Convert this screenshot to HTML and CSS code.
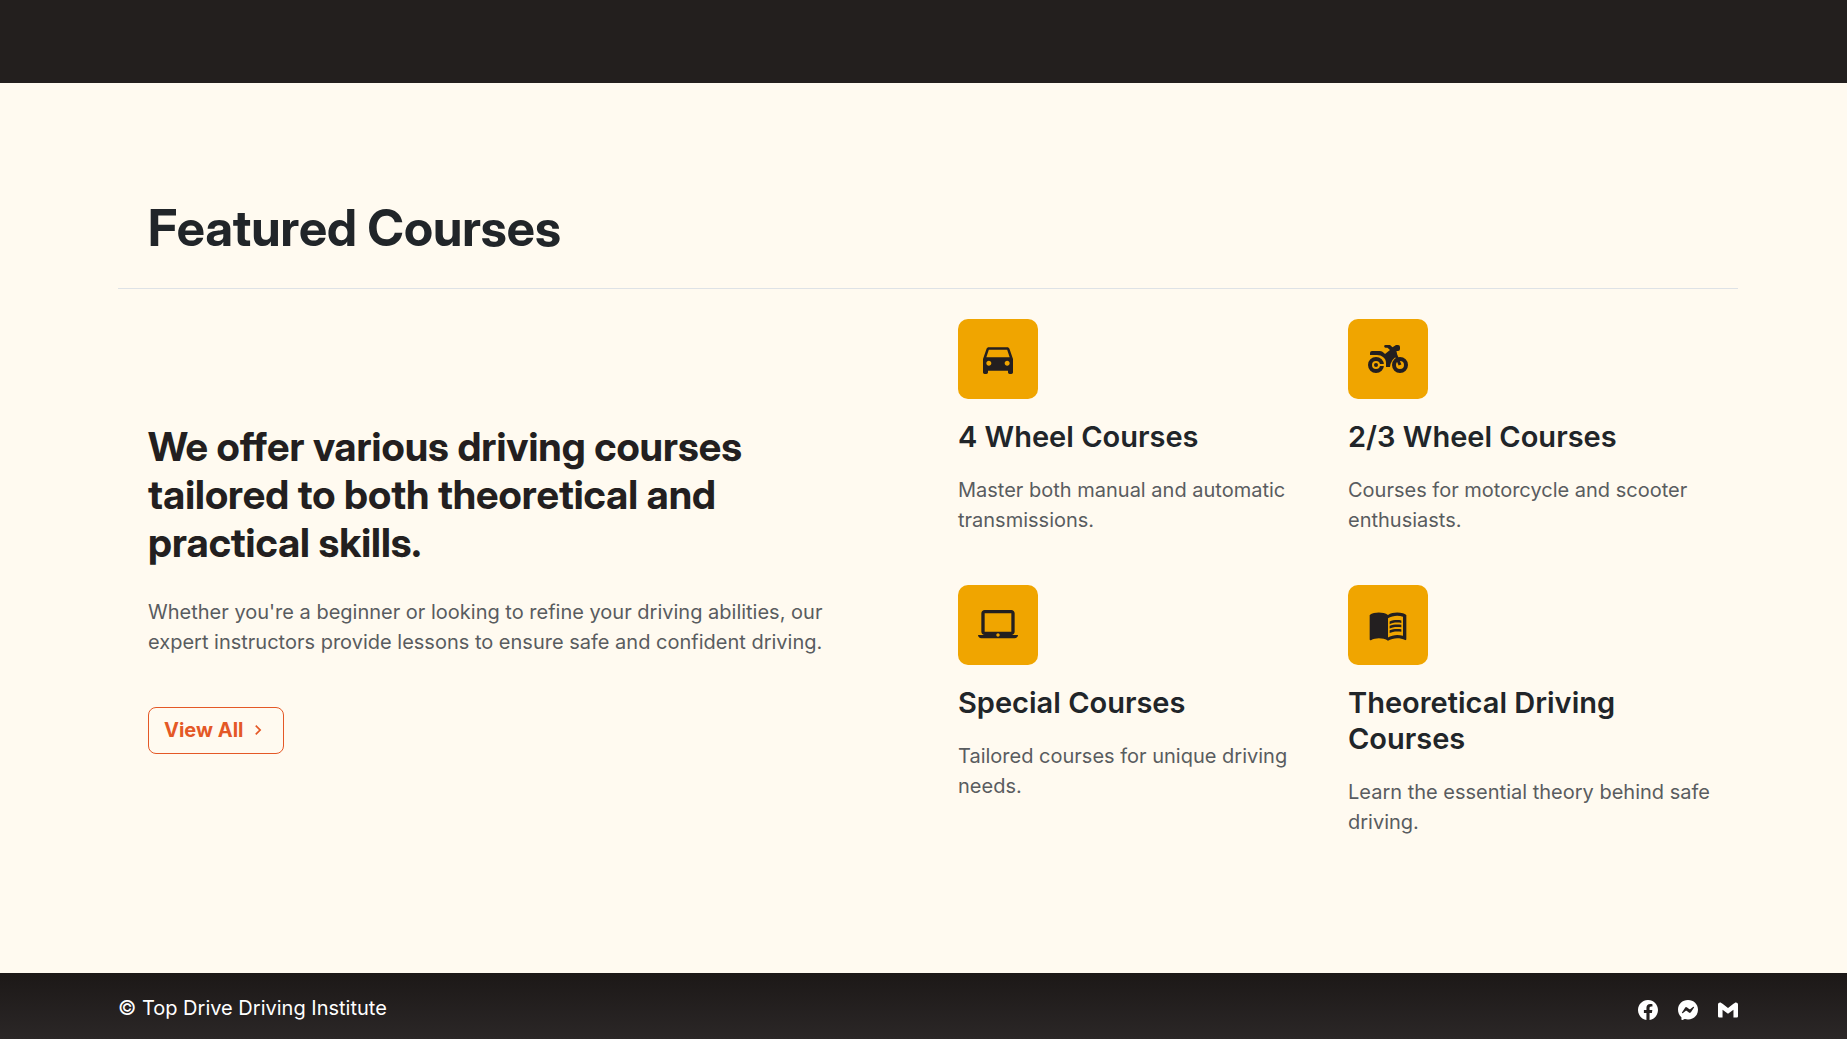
FILE: index.html
```html
<!DOCTYPE html>
<html lang="en">
<head>
<meta charset="utf-8">
<meta name="viewport" content="width=device-width, initial-scale=1">
<title>Top Drive Driving Institute</title>
<link rel="stylesheet" href="styles.css">
</head>
<body>
<div class="band"></div>
<main class="featured">
  <h1 class="featured-title">Featured Courses</h1>
  <div class="featured-body">
    <section class="intro">
      <h2 class="intro-title">We offer various driving courses tailored to both theoretical and practical skills.</h2>
      <p class="intro-text">Whether you're a beginner or looking to refine your driving abilities, our expert instructors provide lessons to ensure safe and confident driving.</p>
      <button type="button" class="view-all">View All
        <svg class="chevron" viewBox="0 0 24 24" aria-hidden="true"><path d="M10 6 8.590 7.410 13.170 12l-4.580 4.590L10 18l6-6z"/></svg>
      </button>
    </section>
    <section class="courses">
      <article class="course">
        <div class="course-icon"><svg viewBox="0 0 24 24" aria-hidden="true"><path d="M18.920 6.010C18.720 5.420 18.160 5 17.500 5h-11c-.66 0-1.210.42-1.420 1.010L3 12v8c0 .55.45 1 1 1h1c.55 0 1-.45 1-1v-1h12v1c0 .55.45 1 1 1h1c.55 0 1-.45 1-1v-8l-2.080-5.990zM6.500 16c-.83 0-1.500-.67-1.500-1.500S5.670 13 6.500 13s1.500.67 1.500 1.500S7.330 16 6.500 16zm11 0c-.83 0-1.500-.67-1.500-1.500s.67-1.500 1.500-1.500 1.500.67 1.500 1.500-.67 1.500-1.500 1.500zM5 11l1.500-4.500h11L19 11H5z"/></svg></div>
        <h3 class="course-title">4 Wheel Courses</h3>
        <p class="course-text">Master both manual and automatic transmissions.</p>
      </article>
      <article class="course">
        <div class="course-icon"><svg viewBox="0 0 40 40" aria-hidden="true">
          <circle class="tyre" cx="8" cy="26" r="6"/><path class="rod" d="M8 26h9"/><circle cx="8" cy="26" r="2"/>
          <circle class="tyre" cx="32" cy="26" r="6"/>
          <path class="fork" d="m27 14 5 12"/>
          <path d="M2 16v-2q0-2 2-2h8q2 0 4 2l1 1 5-4-2.500-2.300h-2a1.350 1.350 0 0 1 0-2.700h4.500l2.500 2.300L28 6h2q2 0 2 2v2q0 2-2 2h-1.500l.5 4-1.500 2q-4 3-5 7l-.5 3h-4v-4q0-4-3-6-2-2-6-2z"/>
        </svg></div>
        <h3 class="course-title">2/3 Wheel Courses</h3>
        <p class="course-text">Courses for motorcycle and scooter enthusiasts.</p>
      </article>
      <article class="course">
        <div class="course-icon"><svg viewBox="0 0 24 24" aria-hidden="true"><path d="M20 18c1.100 0 1.990-.9 1.990-2L22 5c0-1.100-.9-2-2-2H4c-1.100 0-2 .9-2 2v11c0 1.100.9 2 2 2H0c0 1.100.9 2 2 2h20c1.100 0 2-.9 2-2h-4zM4 5h16v11H4V5zm8 14c-.55 0-1-.45-1-1s.45-1 1-1 1 .45 1 1-.45 1-1 1z"/></svg></div>
        <h3 class="course-title">Special Courses</h3>
        <p class="course-text">Tailored courses for unique driving needs.</p>
      </article>
      <article class="course">
        <div class="course-icon"><svg viewBox="0 0 24 24" aria-hidden="true"><path d="M21 5c-1.110-.35-2.330-.5-3.500-.5-1.950 0-4.050.4-5.500 1.500-1.450-1.100-3.550-1.500-5.500-1.500S2.450 4.900 1 6v14.650c0 .25.25.5.5.5.1 0 .15-.05.25-.05C3.100 20.450 5.050 20 6.500 20c1.950 0 4.050.4 5.500 1.500 1.350-.85 3.800-1.500 5.500-1.500 1.650 0 3.350.3 4.750 1.050.1.05.15.05.25.05.25 0 .5-.25.5-.5V6c-.6-.45-1.250-.75-2-1zm0 13.500c-1.100-.35-2.300-.5-3.500-.5-1.700 0-4.150.65-5.500 1.500V8c1.350-.85 3.800-1.500 5.500-1.500 1.200 0 2.400.15 3.500.5v11.500z"/><path d="M17.500 10.500c.88 0 1.730.09 2.500.26V9.240c-.79-.15-1.640-.24-2.500-.24-1.700 0-3.240.29-4.500.83v1.660c1.130-.64 2.700-.99 4.500-.99zM13 12.490v1.660c1.130-.64 2.700-.99 4.500-.99.88 0 1.730.09 2.500.26V11.900c-.79-.15-1.640-.24-2.500-.24-1.700 0-3.240.3-4.500.83zm4.500 1.840c-1.700 0-3.240.29-4.500.83v1.660c1.130-.64 2.700-.99 4.500-.99.88 0 1.730.09 2.500.26v-1.520c-.79-.16-1.640-.24-2.500-.24z"/></svg></div>
        <h3 class="course-title">Theoretical Driving Courses</h3>
        <p class="course-text">Learn the essential theory behind safe driving.</p>
      </article>
    </section>
  </div>
</main>
<footer class="footer">
  <span>© Top Drive Driving Institute</span>
  <nav class="social" aria-label="Contact">
    <a href="#" aria-label="Facebook"><svg viewBox="0 0 16 16" aria-hidden="true"><path d="M16 8.049c0-4.446-3.582-8.050-8-8.050C3.580 0-.002 3.603-.002 8.050c0 4.017 2.926 7.347 6.750 7.951v-5.625h-2.030V8.050H6.750V6.275c0-2.017 1.195-3.131 3.022-3.131.876 0 1.791.157 1.791.157v1.980h-1.009c-.993 0-1.303.621-1.303 1.258v1.510h2.218l-.354 2.326H9.250V16c3.824-.604 6.750-3.934 6.750-7.951"/></svg></a>
    <a href="#" aria-label="Messenger"><svg viewBox="0 0 16 16" aria-hidden="true"><path d="M0 7.760C0 3.301 3.493 0 8 0s8 3.301 8 7.760-3.493 7.760-8 7.760c-.81 0-1.586-.107-2.316-.307a.64.64 0 0 0-.427.03l-1.588.702a.64.64 0 0 1-.898-.566l-.044-1.423a.64.64 0 0 0-.215-.456C.956 12.108 0 10.092 0 7.760m5.546-1.459-2.350 3.728c-.225.358.214.761.551.506l2.525-1.916a.48.48 0 0 1 .578-.002l1.869 1.402a1.200 1.200 0 0 0 1.735-.32l2.350-3.728c.226-.358-.214-.761-.551-.506L9.728 7.381a.48.48 0 0 1-.578.002L7.281 5.980a1.200 1.200 0 0 0-1.735.32z"/></svg></a>
    <a href="#" aria-label="Gmail"><svg viewBox="0 0 24 24" aria-hidden="true"><path d="M24 5.457v13.909c0 .904-.732 1.636-1.636 1.636h-3.819V11.730L12 16.640l-6.545-4.910v9.273H1.636A1.636 1.636 0 0 1 0 19.366V5.457c0-2.023 2.309-3.178 3.927-1.964L5.455 4.640 12 9.548l6.545-4.910 1.528-1.145C21.690 2.280 24 3.434 24 5.457z"/></svg></a>
  </nav>
</footer>
</body>
</html>
```

FILE: styles.css
```css
* { box-sizing: border-box; }
body {
  margin: 0;
  min-height: 100vh;
  display: flex;
  flex-direction: column;
  background: #fffaf0;
  color: #212529;
  font: 400 20px/30px Inter, "Liberation Sans", sans-serif;
}
h1, h2, h3, p { margin: 0; }
h1, h2 { font-family: "Inter Display", Inter, "Liberation Sans", sans-serif; }
.band { height: 83px; background: #231f1e; }
.featured { flex: 1; padding: 115px 109px 116px 118px; }
.featured-title {
  padding: 0 30px 30px;
  border-bottom: 1px solid #dee2e6;
  font-size: 50px;
  line-height: 60px;
  font-weight: 700;
}
.featured-body {
  display: grid;
  grid-template-columns: 1fr 1fr;
  gap: 56px;
  padding: 30px 26px 0 30px;
}
.intro {
  display: flex;
  flex-direction: column;
  justify-content: center;
  align-items: flex-start;
  padding-right: 60px;
}
.intro-title {
  margin-bottom: 30px;
  color: #231f20;
  font-size: 40px;
  line-height: 48px;
  font-weight: 700;
}
.intro-text { margin-bottom: 50px; color: #595c5f; }
.view-all {
  display: flex;
  align-items: center;
  gap: 4px;
  padding: 7px 15px 8px;
  border: 1px solid #e45826;
  border-radius: 8px;
  background: transparent;
  color: #e45826;
  font: inherit;
  font-weight: 700;
  cursor: pointer;
}
.chevron { width: 20px; height: 20px; fill: currentColor; }
.courses { display: grid; grid-template-columns: 1fr 1fr; column-gap: 26px; row-gap: 30px; }
.course { padding-bottom: 20px; }
.course-icon {
  display: grid;
  place-items: center;
  width: 80px;
  height: 80px;
  margin-bottom: 20px;
  border-radius: 10px;
  background: #f0a500;
}
.course-icon svg { width: 40px; height: 40px; fill: #231f20; }
.course-icon .tyre { fill: #f0a500; stroke: #231f20; stroke-width: 4px; }
.course-icon .rod { stroke: #f0a500; stroke-width: 2px; }
.course-icon .fork { stroke: #231f20; stroke-width: 3px; }
.course-title {
  margin-bottom: 20px;
  font-size: 29px;
  line-height: 36px;
  font-weight: 600;
}
.course-text { color: #595c5f; }
.footer {
  display: flex;
  justify-content: space-between;
  align-items: center;
  padding: 20px 109px 16px 118px;
  background: linear-gradient(#1c1817, #2b2727);
  color: #fff;
}
.social { display: flex; gap: 20px; padding-top: 4px; }
.social a { display: flex; color: inherit; }
.social svg { width: 20px; height: 20px; fill: currentColor; }
```
